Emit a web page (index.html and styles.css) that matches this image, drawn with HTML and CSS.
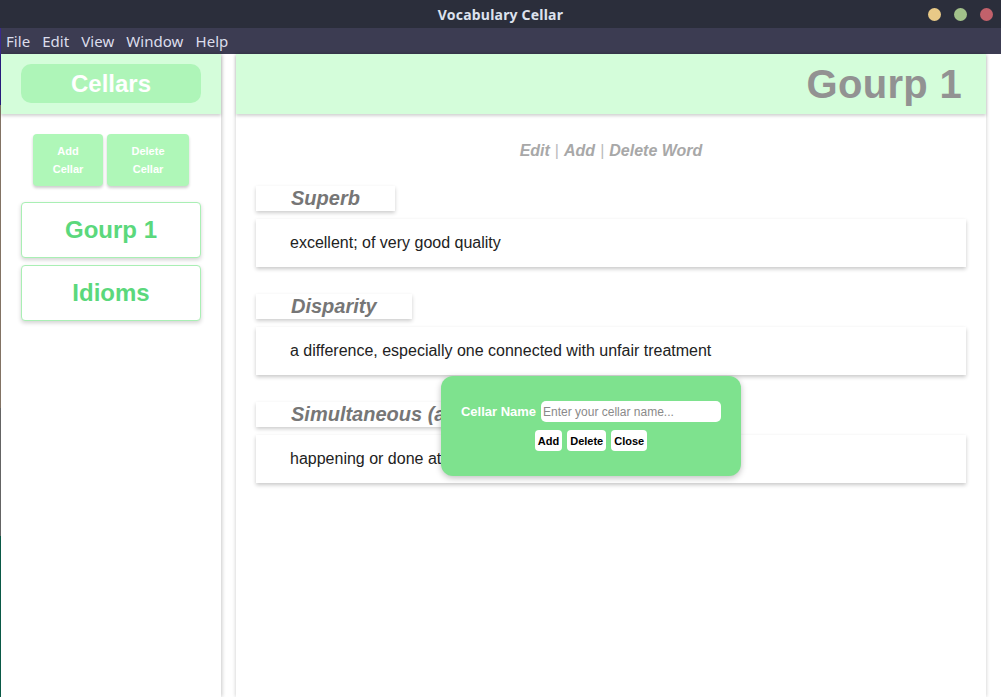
FILE: index.html
```html
<!DOCTYPE html>
<html>
<head>
<meta charset="utf-8">
<title>Vocabulary Cellar</title>
<link rel="stylesheet" href="styles.css">
</head>
<body>
<div class="window">
  <header class="titlebar">
    <div class="tb-side"></div>
    <div class="tb-title">Vocabulary Cellar</div>
    <div class="tb-side tb-controls">
      <span class="dot dot-min"></span>
      <span class="dot dot-max"></span>
      <span class="dot dot-close"></span>
    </div>
  </header>
  <nav class="menubar">
    <span class="menu-item">File</span>
    <span class="menu-item">Edit</span>
    <span class="menu-item">View</span>
    <span class="menu-item">Window</span>
    <span class="menu-item">Help</span>
  </nav>
  <div class="app">
    <div class="desk-strip"></div>
    <aside class="sidebar">
      <div class="side-head">
        <div class="side-pill">Cellars</div>
      </div>
      <div class="side-actions">
        <button class="side-btn btn-add">Add<br>Cellar</button>
        <button class="side-btn btn-del">Delete<br>Cellar</button>
      </div>
      <div class="cellar-list">
        <div class="cellar-card">Gourp 1</div>
        <div class="cellar-card">Idioms</div>
      </div>
    </aside>
    <main class="main">
      <div class="main-head">
        <h1 class="main-title">Gourp 1</h1>
      </div>
      <div class="word-actions">
        <span class="wa">Edit</span><span class="sep">|</span><span class="wa">Add</span><span class="sep">|</span><span class="wa">Delete Word</span>
      </div>
      <div class="words">
        <div class="word">
          <div class="word-tab">Superb</div>
          <div class="word-def">excellent; of very good quality</div>
        </div>
        <div class="word">
          <div class="word-tab">Disparity</div>
          <div class="word-def">a difference, especially one connected with unfair treatment</div>
        </div>
        <div class="word">
          <div class="word-tab">Simultaneous (adj)</div>
          <div class="word-def">happening or done at the same time</div>
        </div>
      </div>
    </main>
  </div>
  <div class="popup">
    <div class="popup-row">
      <label class="popup-label">Cellar Name</label>
      <input class="popup-input" type="text" placeholder="Enter your cellar name...">
    </div>
    <div class="popup-buttons">
      <button class="pbtn">Add</button>
      <button class="pbtn">Delete</button>
      <button class="pbtn">Close</button>
    </div>
  </div>
</div>
</body>
</html>
```

FILE: styles.css
```css
* { box-sizing: border-box; }
html, body { margin: 0; padding: 0; }
body {
  width: 1001px;
  height: 697px;
  overflow: hidden;
  font-family: "Liberation Sans", Arial, sans-serif;
  background: #ffffff;
}
.window {
  position: relative;
  width: 1001px;
  height: 697px;
  display: flex;
  flex-direction: column;
}
.titlebar {
  height: 28px;
  background: #2b2e3b;
  display: grid;
  grid-template-columns: 1fr auto 1fr;
  align-items: center;
}
.tb-title {
  color: #dde2ee;
  font-family: "Noto Sans", "DejaVu Sans", sans-serif;
  font-weight: 700;
  font-size: 14px;
  letter-spacing: 0.2px;
}
.tb-controls {
  display: flex;
  justify-content: flex-end;
  gap: 13px;
  padding-right: 8px;
}
.dot {
  width: 13px;
  height: 13px;
  border-radius: 50%;
  display: block;
}
.dot-min { background: #e8c987; }
.dot-max { background: #a2c18a; }
.dot-close { background: #c2616b; }
.menubar {
  height: 26px;
  background: #3c3c52;
  display: flex;
  align-items: center;
  padding-left: 5px;
  gap: 12px;
  font-family: "Noto Sans", "DejaVu Sans", sans-serif;
  font-size: 15px;
  letter-spacing: 0.05px;
  color: #dcdeec;
  border-left: 1px solid #3a2a8a;
}
.app {
  flex: 1;
  display: flex;
  min-height: 0;
}
.desk-strip {
  width: 1px;
  background: linear-gradient(#2c1f8c 0 8%, #8a7a6a 8% 55%, #6a6a6a 55% 75%, #0b5e4a 75% 100%);
}
.sidebar {
  width: 220px;
  background: #ffffff;
  box-shadow: 1px 0 4px rgba(0,0,0,0.22);
  display: flex;
  flex-direction: column;
  z-index: 1;
}
.side-head {
  height: 60px;
  background: #d4fdda;
  padding: 10px 20px 11px;
  box-shadow: 0 2px 3px rgba(0,0,0,0.18);
}
.side-pill {
  height: 39px;
  border-radius: 10px;
  background: #aef5b8;
  color: #ffffff;
  font-weight: 700;
  font-size: 24px;
  display: flex;
  align-items: center;
  justify-content: center;
}
.side-actions {
  display: flex;
  justify-content: center;
  gap: 4px;
  margin-top: 20px;
}
.side-btn {
  height: 52px;
  border: none;
  border-radius: 4px;
  background: #aff7b8;
  color: #ffffff;
  font-family: "Liberation Sans", Arial, sans-serif;
  font-weight: 700;
  font-size: 11px;
  line-height: 18px;
  box-shadow: 0 2px 3px rgba(0,0,0,0.2);
  padding: 0;
}
.btn-add { width: 70px; }
.btn-del { width: 82px; }
.cellar-list {
  display: flex;
  flex-direction: column;
  gap: 7px;
  padding: 16px 20px 0;
}
.cellar-card {
  height: 56px;
  border: 1px solid #a9efb4;
  border-radius: 4px;
  background: #ffffff;
  box-shadow: 0 2px 4px rgba(0,0,0,0.18);
  color: #5bd87c;
  font-weight: 700;
  font-size: 24px;
  display: flex;
  align-items: center;
  justify-content: center;
}
.main {
  width: 750px;
  margin-left: 15px;
  background: #ffffff;
  box-shadow: 0 0 4px rgba(0,0,0,0.22);
  display: flex;
  flex-direction: column;
}
.main-head {
  height: 60px;
  background: #d4fdda;
  box-shadow: 0 2px 3px rgba(0,0,0,0.18);
  display: flex;
  align-items: center;
  justify-content: flex-end;
  padding-right: 24px;
}
.main-title {
  margin: 0;
  font-size: 40px;
  font-weight: 700;
  color: #929292;
  line-height: 1;
  letter-spacing: 0.3px;
}
.word-actions {
  text-align: center;
  margin-top: 28px;
  height: 18px;
  line-height: 18px;
  font-size: 16px;
  color: #a8a8a8;
}
.wa { font-weight: 700; font-style: italic; }
.sep { margin: 0 5px; color: #bbbbbb; }
.words {
  padding: 0 20px;
  margin-top: 26px;
  display: flex;
  flex-direction: column;
  gap: 27.5px;
}
.word {
  display: flex;
  flex-direction: column;
  align-items: flex-start;
  gap: 8px;
}
.word-tab {
  height: 24.5px;
  line-height: 24px;
  padding: 0 35px;
  background: #ffffff;
  box-shadow: 0 2px 4px rgba(0,0,0,0.2);
  font-size: 20px;
  font-weight: 700;
  font-style: italic;
  color: #767676;
}
.word-def {
  align-self: stretch;
  height: 48px;
  display: flex;
  align-items: center;
  padding-left: 34px;
  background: #ffffff;
  box-shadow: 0 2px 4px rgba(0,0,0,0.22);
  font-size: 16px;
  color: #222222;
}
.popup {
  position: absolute;
  left: 441px;
  top: 376px;
  width: 300px;
  height: 100px;
  background: #7ee28e;
  border-radius: 12px;
  box-shadow: 0 2px 6px rgba(0,0,0,0.25);
  display: flex;
  flex-direction: column;
  align-items: center;
  justify-content: center;
  gap: 8px;
  z-index: 5;
}
.popup-row {
  display: flex;
  align-items: center;
  gap: 5px;
}
.popup-label {
  color: #ffffff;
  font-weight: 700;
  font-size: 13px;
}
.popup-input {
  width: 180px;
  height: 21px;
  border: none;
  border-radius: 5px;
  padding: 0 2px;
  font-family: "Liberation Sans", Arial, sans-serif;
  font-size: 12px;
  outline: none;
}
.popup-input::placeholder { color: #8a8a8a; }
.popup-buttons {
  display: flex;
  gap: 5px;
}
.pbtn {
  height: 21px;
  border: none;
  border-radius: 4px;
  background: #ffffff;
  padding: 0 3px;
  font-family: "Liberation Sans", Arial, sans-serif;
  font-weight: 700;
  font-size: 11px;
  color: #000000;
}
```
